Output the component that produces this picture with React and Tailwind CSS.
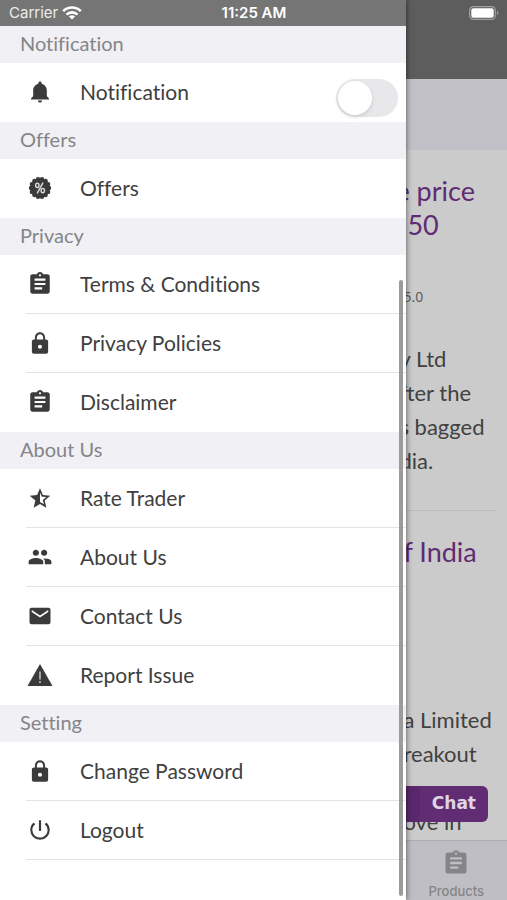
import React from "react";
import { MdAssignment, MdPowerSettingsNew } from "react-icons/md";
import {
  IoMdNotifications,
  IoMdLock,
  IoMdStarHalf,
  IoMdPeople,
  IoMdMail,
} from "react-icons/io";

function OfferBadge() {
  const bumps = Array.from({ length: 14 }, (_, i) => {
    const a = (i * Math.PI * 2) / 14;
    return <circle key={i} cx={12 + 9 * Math.cos(a)} cy={12 + 9 * Math.sin(a)} r="2.2" />;
  });
  return (
    <svg viewBox="0 0 24 24" className="size-6" fill="currentColor" aria-hidden="true">
      <circle cx="12" cy="12" r="10" />
      {bumps}
      <g stroke="#dcdcdc" fill="none" strokeWidth="1.4">
        <ellipse cx="9.3" cy="9.3" rx="1.7" ry="2.2" />
        <ellipse cx="14.8" cy="14.6" rx="1.7" ry="2.2" />
        <path d="M15 6.6 9.2 17.4" />
      </g>
    </svg>
  );
}

function WarningTriangle() {
  return (
    <svg viewBox="0 0 26 22" className="h-[22px] w-[26px]" fill="currentColor" aria-hidden="true">
      <path d="M13 0 25.5 22H.5Z" />
      <path d="M12.2 7.5h1.6v8h-1.6zM12.2 17h1.6v2h-1.6z" fill="#bdbdbd" />
    </svg>
  );
}

const sections = [
  { title: "Notification", items: [{ label: "Notification", icon: <IoMdNotifications />, toggle: true }] },
  { title: "Offers", items: [{ label: "Offers", icon: <OfferBadge /> }] },
  {
    title: "Privacy",
    items: [
      { label: "Terms & Conditions", icon: <MdAssignment /> },
      { label: "Privacy Policies", icon: <IoMdLock /> },
      { label: "Disclaimer", icon: <MdAssignment /> },
    ],
  },
  {
    title: "About Us",
    items: [
      { label: "Rate Trader", icon: <IoMdStarHalf className="size-[26px]" /> },
      { label: "About Us", icon: <IoMdPeople /> },
      { label: "Contact Us", icon: <IoMdMail className="size-6" /> },
      { label: "Report Issue", icon: <WarningTriangle /> },
    ],
  },
  {
    title: "Setting",
    trailingLine: true,
    items: [
      { label: "Change Password", icon: <IoMdLock /> },
      { label: "Logout", icon: <MdPowerSettingsNew /> },
    ],
  },
];

const rowText = "flex flex-1 items-center text-left text-[21px] leading-6 text-[#404040]";

function Row({ item, line }) {
  const content = (
    <>
      <span className="flex w-7 shrink-0 justify-center text-[26px] text-[#3b3b3b]">{item.icon}</span>
      <span className="ml-[26px]">{item.label}</span>
    </>
  );
  return (
    <li className={`ml-[26px] flex h-[59px] border-b ${line ? "border-[#e4e4e6]" : "border-transparent"}`}>
      {item.toggle ? (
        <>
          <label htmlFor="notification-switch" className={rowText}>{content}</label>
          <input
            id="notification-switch"
            type="checkbox"
            role="switch"
            className="mr-2 mb-1 h-[38px] w-[62px] shrink-0 appearance-none self-end rounded-full bg-[#e8e8ea] p-0.5 before:block before:size-[34px] before:rounded-full before:bg-white before:shadow-[0_2px_4px_rgba(0,0,0,0.12)] checked:bg-green-500 checked:before:ml-6"
          />
        </>
      ) : (
        <button type="button" className={rowText}>{content}</button>
      )}
    </li>
  );
}

function Drawer() {
  return (
    <nav className="absolute inset-y-0 left-0 w-4/5 overflow-hidden bg-white pt-[26px] shadow-[0_0_6px_rgba(0,0,0,0.6)] [font-variant-ligatures:none]">
      {sections.map((s) => (
        <section key={s.title}>
          <h2 className="flex h-[37px] items-center bg-[#f0f0f5] pb-[3px] pl-5 text-xl text-[#858588]">{s.title}</h2>
          <ul>
            {s.items.map((item, i) => (
              <Row key={item.label} item={item} line={s.trailingLine || i < s.items.length - 1} />
            ))}
          </ul>
        </section>
      ))}
      <div className="absolute top-[280px] right-[3px] bottom-1 w-1 rounded-full bg-[#9b9b9b]" />
    </nav>
  );
}

function StatusBar() {
  return (
    <div className="absolute inset-x-0 top-0 grid h-[26px] grid-cols-3 items-center pr-2 pl-[9px] font-['Inter','Liberation_Sans',sans-serif] text-[15px] text-white">
      <div className="absolute inset-y-0 left-0 w-4/5 bg-[#757575]" />
      <div className="relative flex items-center gap-1 text-[#ececec]">
        <span>Carrier</span>
        <svg viewBox="0 0 20 14" className="h-3.5 w-5" fill="none" stroke="white" strokeWidth="2.6" aria-hidden="true">
          <path d="M1.2 5.2a12.4 12.4 0 0 1 17.6 0" />
          <path d="M4.5 8.6a7.8 7.8 0 0 1 11 0" />
          <path d="M10 13.6 6.9 10.5a4.4 4.4 0 0 1 6.2 0Z" fill="white" stroke="none" />
        </svg>
      </div>
      <div className="relative text-center font-semibold">11:25 AM</div>
      <svg viewBox="0 0 30 14" className="relative h-3.5 w-[30px] justify-self-end" aria-hidden="true">
        <rect x=".7" y=".7" width="25.6" height="12.6" rx="3.6" fill="none" stroke="#a0a0a0" strokeWidth="1.2" />
        <rect x="2.3" y="2.3" width="22.4" height="9.4" rx="2" fill="white" />
        <path d="M28 4.8c1.8.8 1.8 3.6 0 4.4Z" fill="#a0a0a0" />
      </svg>
    </div>
  );
}

function Feed() {
  return (
    <div className="flex h-full flex-col bg-[#cbcbcb]">
      <header className="h-[79px] shrink-0 bg-[#5d5d5d]" />
      <div className="h-[71px] shrink-0 bg-[#c2c1c7]" />
      <main className="min-h-0 flex-1 overflow-hidden pl-[78%] whitespace-nowrap">
        <article className="mr-[11px] h-[361px] border-b border-[#bcbcbc] pt-6 text-[22px] leading-[34px] text-[#414141]">
          <h3 className="text-[27px] text-[#5f2c73]">
            e price
            <br />
            <span className="pl-3">50</span>
          </h3>
          <p className="pt-[38px] pl-2 text-sm leading-[34px] text-[#5c5c5c] font-['Noto_Sans',sans-serif]">5.0</p>
          <p className="pt-7 pl-1">
            y Ltd
            <br />
            fter the
            <br />
            s bagged
            <br />
            dia.
          </p>
        </article>
        <article className="pt-6 text-[22px] leading-[34px] text-[#414141]">
          <h3 className="pl-2 text-[27px] text-[#5f2c73]">f India</h3>
          <p className="pt-[134px] pl-2">
            a Limited
            <br />
            reakout
            <br />
            <br />
            ove in
          </p>
        </article>
      </main>
      <footer className="flex h-[60px] shrink-0 justify-end border-t border-[#adadb0] bg-[#bfbec4]">
        <a href="#products" className="flex w-1/5 flex-col items-center gap-1.5 pt-2 text-[#858588]">
          <MdAssignment className="size-7" aria-hidden="true" />
          <span className="text-[13px] leading-4 font-medium font-['Inter',sans-serif]">Products</span>
        </a>
      </footer>
      <button
        type="button"
        className="absolute right-[19px] bottom-[78px] flex h-9 w-32 items-center justify-end rounded-md bg-gradient-to-r from-[#5a286d] from-[47%] to-[#612c74] to-[47%] pr-3 text-[17px] font-bold text-[#dfd5e3] font-['DejaVu_Sans',sans-serif]"
      >
        Chat
      </button>
    </div>
  );
}

export default function App() {
  return (
    <div className="relative h-screen min-h-[900px] overflow-hidden font-['Lato',sans-serif]">
      <Feed />
      <Drawer />
      <StatusBar />
    </div>
  );
}
